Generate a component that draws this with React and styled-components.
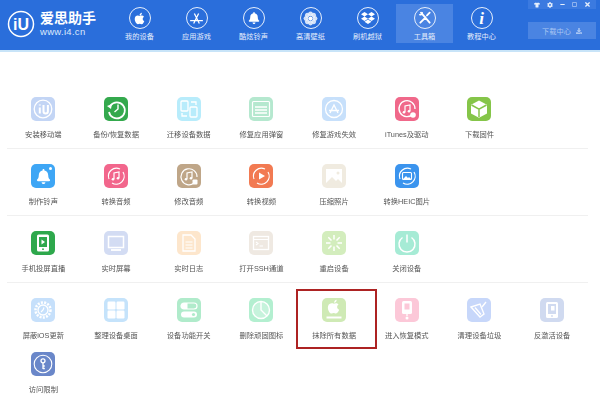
import styled, { createGlobalStyle } from 'styled-components';
import { FaApple, FaBell, FaDropbox, FaTshirt, FaCog, FaTimes, FaRegSquare, FaMinus, FaDownload } from 'react-icons/fa';

const NavInfo = styled.span`
	font-family: "Liberation Serif", serif;
	font-size: 17px;
	font-style: italic;
	font-weight: 700;
	line-height: 1;
`;

const arcs = (
	<>
		<path d="M5 15a8 8 0 0 1 11-10" />
		<path d="M19 8a8 8 0 0 1-11 11" />
	</>
);

const note = <path d="M10 15V9l5-1v6" strokeWidth="1.2" />;
const noteHeads = (
	<>
		<circle cx="9" cy="15.2" r="1.3" className="solid" />
		<circle cx="14" cy="14.2" r="1.3" className="solid" />
	</>
);

const glyphs = {
	logo: (
		<>
			<circle cx="12" cy="12" r="8.8" strokeWidth="1.3" />
			<path d="M8.8 10.5v6M8.8 7.6v1M12.5 8v6.2a2.2 2.2 0 0 0 4.4 0V8" strokeWidth="2" />
		</>
	),
	backup: (
		<>
			<path d="M6.5 8.5A8 8 0 1 1 5 15" strokeWidth="1.7" />
			<path d="M3 9l4 3 1-5z" className="solid" />
			<path d="M14 7.5V12l-3.5 3" strokeWidth="1.4" />
		</>
	),
	transfer: (
		<>
			<rect x="4" y="4" width="7" height="10" rx="1" strokeWidth="1.3" />
			<rect x="13" y="10" width="7" height="10" rx="1" strokeWidth="1.3" />
			<path d="M14 5h5v3M10 19H5v-3" strokeWidth="1.3" />
		</>
	),
	popup: (
		<>
			<rect x="3.5" y="4.5" width="17" height="15" rx="1" strokeWidth="1.2" />
			<path d="M6 10h12M6 13h12M6 16h12" strokeWidth="1.4" />
		</>
	),
	game: (
		<>
			<circle cx="12" cy="12" r="8.5" strokeWidth="1.3" />
			<path d="M8 16l4-8 4 8M7 13.5h10" strokeWidth="1.3" />
		</>
	),
	itunes: (
		<>
			<path d="M18 17a8 8 0 1 1 2-5" strokeWidth="1.3" />
			{note}
			{noteHeads}
			<circle cx="18" cy="18" r="2.8" className="solid" />
		</>
	),
	cube: (
		<>
			<path d="M12 3.5l8 4.2v8.8l-8 4.2-8-4.2V7.7z" className="solid" />
			<path d="M4.5 8l7.5 4.2L19.5 8M12 12.2V20" className="tint" strokeWidth="1.5" />
		</>
	),
	audio: (
		<>
			{arcs}
			{note}
			{noteHeads}
		</>
	),
	editAudio: (
		<>
			<path d="M17 19a8 8 0 1 1 3-6" strokeWidth="1.2" />
			{note}
			{noteHeads}
			<rect x="15.5" y="15.5" width="5" height="5" rx="1" className="solid" />
		</>
	),
	video: (
		<>
			{arcs}
			<path d="M10 8.5l6 3.5-6 3.5z" className="solid" />
		</>
	),
	photo: (
		<>
			<rect x="4" y="5" width="16" height="14" className="solid" />
			<path d="M4 19l6-6 4 4 2-2 4 4z" className="tint" />
			<circle cx="16" cy="9" r="1.5" className="tint" />
		</>
	),
	heic: (
		<>
			{arcs}
			<rect x="7.5" y="8.5" width="9" height="7" rx="1" strokeWidth="1.1" />
			<path d="M8 15l3-3 2 2 1-1 2 2z" className="solid" />
		</>
	),
	cast: (
		<>
			<rect x="6" y="3.5" width="12" height="17" rx="1.5" className="solid" />
			<rect x="8" y="6" width="8" height="10" className="tint" />
			<path d="M10.5 8.5l3.5 2.5-3.5 2.5z" className="solid" />
			<circle cx="12" cy="18.2" r="0.9" className="tint" />
		</>
	),
	screen: (
		<>
			<rect x="4.5" y="5.5" width="15" height="11" strokeWidth="1.5" />
			<path d="M7 19h10" strokeWidth="1.8" />
		</>
	),
	log: (
		<>
			<path d="M6 4h8l4 4v12H6z" strokeWidth="1.3" />
			<path d="M8.5 11h7M8.5 14h7M8.5 17h7" strokeWidth="1.2" />
		</>
	),
	ssh: (
		<>
			<rect x="4.5" y="5.5" width="15" height="13" strokeWidth="1.3" />
			<path d="M4.5 8.5h15M7 11l2 1.5L7 14M10.5 15H14" strokeWidth="1.1" />
		</>
	),
	reboot: (
		<path
			d="M12 4v4.5M12 15.5V20M4 12h4.5M15.5 12H20M6.3 6.3l3.2 3.2M14.5 14.5l3.2 3.2M17.7 6.3l-3.2 3.2M9.5 14.5l-3.2 3.2"
			strokeWidth="1.5"
		/>
	),
	power: (
		<>
			<path d="M7.5 6.5a8 8 0 1 0 9 0" strokeWidth="1.5" />
			<path d="M12 3.5v8" strokeWidth="1.5" />
		</>
	),
	gear: (
		<>
			<circle cx="12" cy="12" r="7.5" strokeWidth="2.5" strokeDasharray="2 1.3" />
			<circle cx="12" cy="12" r="5" strokeWidth="1.3" />
			<path d="M13 9.5L12 12l-2 2" strokeWidth="1.2" />
		</>
	),
	grid: (
		<>
			<rect x="3.5" y="3.5" width="8" height="8" rx="1.2" className="solid" />
			<rect x="12.5" y="3.5" width="8" height="8" rx="1.2" className="solid" />
			<rect x="3.5" y="12.5" width="8" height="8" rx="1.2" className="solid" />
			<rect x="12.5" y="12.5" width="8" height="8" rx="1.2" className="solid" />
		</>
	),
	toggle: (
		<>
			<rect x="4" y="5" width="16" height="6" rx="3" strokeWidth="1.2" />
			<path d="M7 5h3.5v6H7a3 3 0 0 1 0-6z" className="solid" />
			<rect x="4" y="13.5" width="16" height="6" rx="3" className="solid" />
			<circle cx="16.5" cy="16.5" r="1.6" className="tint" />
		</>
	),
	pie: (
		<>
			<circle cx="12" cy="12" r="8.5" fill="#fff" fillOpacity="0.25" strokeWidth="1.4" />
			<path d="M12 3.5V12l6 6" strokeWidth="1.4" />
		</>
	),
	erase: (
		<>
			<g transform="translate(-2.6 -3.6) scale(1.2)">
				<path
					d="M12 7.8c1-.5 2.8-1 4 .6-1.8 1.2-1.5 3.6.5 4.4-.7 1.7-1.8 3.2-3 3.2-.7 0-1-.4-1.6-.4s-1 .4-1.7.4c-1.7 0-3.7-3.7-3-6.2.6-2.3 3.2-2.8 4.8-2z"
					className="solid"
				/>
				<path d="M12.2 7c0-1.3.9-2.3 2.2-2.5 0 1.4-.9 2.4-2.2 2.5z" className="solid" />
			</g>
			<path d="M4.5 19.5h15" strokeWidth="2" />
		</>
	),
	recovery: (
		<>
			<rect x="7" y="3" width="10" height="13" rx="1.5" className="solid" />
			<rect x="9.5" y="5.5" width="5" height="6" className="tint" />
			<path d="M12 16v2" strokeWidth="1.3" />
			<circle cx="12" cy="20" r="1.5" className="solid" />
		</>
	),
	broom: (
		<>
			<path d="M4 9l9-3 4 10-4 3z" strokeWidth="1.4" />
			<path d="M15 9l4-5M8 9.5l6 7" strokeWidth="1.4" />
		</>
	),
	tablet: (
		<>
			<rect x="6" y="4" width="12" height="16" rx="1.5" className="solid" />
			<rect x="8" y="6" width="8" height="10" className="tint" />
			<rect x="11" y="8" width="3.5" height="4.5" className="solid" />
			<circle cx="12" cy="18" r="0.9" className="tint" />
		</>
	),
	key: (
		<>
			<circle cx="12" cy="12" r="8.8" strokeWidth="1.1" />
			<circle cx="12" cy="8.8" r="2" strokeWidth="1.3" />
			<path d="M12 10.8V17M12 14h1.8M12 16.5h1.8" strokeWidth="1.3" />
		</>
	),
};

const sections = [
	[
		{ label: '安装移动端', color: '#c3d5f5', glyph: 'logo' },
		{ label: '备份/恢复数据', color: '#34a94d', glyph: 'backup' },
		{ label: '迁移设备数据', color: '#b8ecfb', glyph: 'transfer' },
		{ label: '修复应用弹窗', color: '#b5e8cf', glyph: 'popup' },
		{ label: '修复游戏失效', color: '#c7e0fb', glyph: 'game' },
		{ label: 'iTunes及驱动', color: '#f0688a', glyph: 'itunes' },
		{ label: '下载固件', color: '#85c549', glyph: 'cube' },
	],
	[
		{ label: '制作铃声', color: '#3ea6f5', bell: true },
		{ label: '转换音频', color: '#f2668c', glyph: 'audio' },
		{ label: '修改音频', color: '#bfa688', glyph: 'editAudio' },
		{ label: '转换视频', color: '#f27a52', glyph: 'video' },
		{ label: '压缩照片', color: '#f0ebe0', glyph: 'photo' },
		{ label: '转换HEIC图片', color: '#3b94ee', glyph: 'heic' },
	],
	[
		{ label: '手机投屏直播', color: '#2ea84c', glyph: 'cast' },
		{ label: '实时屏幕', color: '#d3dcf3', glyph: 'screen' },
		{ label: '实时日志', color: '#fde6cc', glyph: 'log' },
		{ label: '打开SSH通道', color: '#efe9e2', glyph: 'ssh' },
		{ label: '重启设备', color: '#d3edbd', glyph: 'reboot' },
		{ label: '关闭设备', color: '#a6ebd5', glyph: 'power' },
	],
	[
		{ label: '屏蔽iOS更新', color: '#c6e0fb', glyph: 'gear' },
		{ label: '整理设备桌面', color: '#c5e3fb', glyph: 'grid' },
		{ label: '设备功能开关', color: '#b0ebcb', glyph: 'toggle' },
		{ label: '删除顽固图标', color: '#b3efd0', glyph: 'pie' },
		{ label: '抹除所有数据', color: '#cfeab5', glyph: 'erase', marked: true },
		{ label: '进入恢复模式', color: '#fcc8d8', glyph: 'recovery' },
		{ label: '清理设备垃圾', color: '#c7d7fa', glyph: 'broom' },
		{ label: '反激活设备', color: '#d0daf0', glyph: 'tablet' },
		{ label: '访问限制', color: '#6a87c9', glyph: 'key' },
	],
];

const navItems = [
	{ label: '我的设备', icon: <FaApple size={13} /> },
	{
		label: '应用游戏',
		icon: (
			<svg viewBox="0 0 24 24" width="17" height="17" fill="none" stroke="#fff" strokeWidth="1.8">
				<path d="M9 5l7 14M15 5L8 19M3 15h18" />
			</svg>
		),
	},
	{ label: '酷炫铃声', icon: <FaBell size={12} /> },
	{
		label: '高清壁纸',
		icon: (
			<svg viewBox="0 0 24 24" width="17" height="17" fill="#fff">
				<circle cx="12" cy="12" r="3" />
				{[0, 45, 90, 135, 180, 225, 270, 315].map((deg) => (
					<circle key={deg} cx="12" cy="5.5" r="3.3" opacity="0.8" transform={`rotate(${deg} 12 12)`} />
				))}
			</svg>
		),
	},
	{ label: '刷机越狱', icon: <FaDropbox size={14} /> },
	{
		label: '工具箱',
		active: true,
		icon: (
			<svg viewBox="0 0 24 24" width="16" height="16" fill="none" stroke="#fff" strokeWidth="2.8" strokeLinecap="round">
				<path d="M6 4l13 15M19 4l-4 4M5 19L13 11" />
				<path d="M4 7a3 3 0 0 0 4-3" strokeWidth="2" />
			</svg>
		),
	},
	{ label: '教程中心', icon: <NavInfo>i</NavInfo> },
];

export default function App() {
	return (
		<>
			<GlobalStyle />
			<Page>
				<Header>
					<Brand>
						<BrandMark viewBox="0 0 28 28">
							<circle cx="14" cy="14" r="12.5" />
							<text x="14" y="20" textAnchor="middle">
								iU
							</text>
						</BrandMark>
						<BrandText>
							<BrandName>爱思助手</BrandName>
							<BrandUrl>www.i4.cn</BrandUrl>
						</BrandText>
					</Brand>
					<Nav>
						{navItems.map((item) => (
							<NavItem key={item.label} $active={item.active}>
								<NavCircle>{item.icon}</NavCircle>
								<NavLabel>{item.label}</NavLabel>
							</NavItem>
						))}
					</Nav>
					<Side>
						<WindowBar>
							<FaTshirt size={6} />
							<FaCog size={6} />
							<FaMinus size={5} />
							<FaRegSquare size={5} />
							<FaTimes size={7} />
						</WindowBar>
						<DownloadButton>
							下载中心
							<FaDownload size={6} />
						</DownloadButton>
					</Side>
				</Header>
				<Main>
					{sections.map((tools, i) => (
						<Section key={i} $last={i === sections.length - 1}>
							{tools.map((tool) => (
								<Tool key={tool.label} $marked={tool.marked}>
									<Tile $color={tool.color}>
										{tool.bell ? (
											<>
												<FaBell size={15} color="#fff" />
												<Sparkle />
											</>
										) : (
											<Glyph viewBox="0 0 24 24" $color={tool.color}>
												{glyphs[tool.glyph]}
											</Glyph>
										)}
									</Tile>
									<ToolLabel>{tool.label}</ToolLabel>
								</Tool>
							))}
						</Section>
					))}
				</Main>
			</Page>
		</>
	);
}

const GlobalStyle = createGlobalStyle`
	html, body {
		margin: 0;
		background: #fff;
	}
	body {
		font-family: "Liberation Sans", "Noto Sans CJK SC", sans-serif;
	}
`;

const Page = styled.div`
	width: 600px;
	height: 411px;
	overflow: hidden;
	filter: blur(0.45px);
`;

const Header = styled.header`
	display: flex;
	height: 50px;
	background: #2a6edb;
	border-bottom: 2px solid #c8e4f8;
`;

const Brand = styled.div`
	display: flex;
	align-items: center;
	gap: 5px;
	width: 111px;
	padding: 0 0 2px 7px;
	box-sizing: border-box;
`;

const BrandMark = styled.svg`
	width: 28px;
	height: 28px;
	flex: none;

	circle {
		fill: none;
		stroke: #fff;
		stroke-width: 1.5;
	}
	text {
		fill: #fff;
		font-family: "Liberation Sans", sans-serif;
		font-size: 16px;
		font-weight: 700;
	}
`;

const BrandText = styled.div`
	display: flex;
	flex-direction: column;
	color: #fff;
`;

const BrandName = styled.span`
	font-size: 14px;
	font-weight: 700;
	line-height: 16px;
	white-space: nowrap;
`;

const BrandUrl = styled.span`
	font-size: 9.5px;
	line-height: 12px;
	color: #dce9fb;
	letter-spacing: 0.3px;
`;

const Nav = styled.nav`
	display: flex;
	padding-top: 4px;
	height: 39px;
`;

const NavItem = styled.div`
	display: flex;
	flex-direction: column;
	align-items: center;
	width: 57px;
	height: 39px;
	padding-top: 3px;
	box-sizing: border-box;
	background: ${({ $active }) => ($active ? '#4a84e2' : 'transparent')};
`;

const NavCircle = styled.div`
	display: flex;
	flex: none;
	align-items: center;
	justify-content: center;
	width: 20px;
	height: 20px;
	border: 1px solid #e6effc;
	border-radius: 50%;
	color: #fff;
`;

const NavLabel = styled.span`
	margin-top: 3px;
	font-size: 7.2px;
	line-height: 10px;
	color: #e4edfb;
	white-space: nowrap;
`;

const Side = styled.div`
	display: flex;
	flex-direction: column;
	margin-left: auto;
	margin-right: 4px;
	width: 68px;
`;

const WindowBar = styled.div`
	display: flex;
	align-items: center;
	justify-content: space-around;
	height: 9px;
	padding: 0 2px;
	background: #3b7ae0;
	color: #e6effc;
`;

const DownloadButton = styled.div`
	display: flex;
	align-items: center;
	justify-content: center;
	gap: 5px;
	height: 17px;
	margin-top: 13px;
	background: #4a84e2;
	color: #a9c6f3;
	font-size: 7.2px;
`;

const Main = styled.main`
	padding: 30px 12px 0 8px;
`;

const Section = styled.section`
	display: grid;
	grid-template-columns: repeat(8, 72.7px);
	grid-auto-rows: 43px;
	row-gap: 11px;
	padding: 15px 0 ${({ $last }) => ($last ? '0' : '8px')};
	border-bottom: ${({ $last }) => ($last ? 'none' : '1px solid #f0f0f0')};
	margin-left: -1px;
`;

const Tool = styled.div`
	position: relative;
	display: flex;
	flex-direction: column;
	align-items: center;

	${({ $marked }) =>
		$marked &&
		`
		&::after {
			content: '';
			position: absolute;
			left: -2px;
			top: -9px;
			width: 77px;
			height: 56px;
			border: 2px solid #ad2323;
		}
	`}
`;

const Tile = styled.div`
	position: relative;
	display: flex;
	flex: none;
	align-items: center;
	justify-content: center;
	width: 24px;
	height: 24px;
	border-radius: 5px;
	background: ${({ $color }) => $color};
`;

const Sparkle = styled.i`
	position: absolute;
	top: 3px;
	right: 3px;
	width: 3px;
	height: 3px;
	border-radius: 50%;
	background: #fff;
`;

const Glyph = styled.svg`
	width: 24px;
	height: 24px;
	fill: none;
	stroke: #fff;
	stroke-width: 1.2;

	.solid {
		fill: #fff;
		stroke: none;
	}
	.tint {
		fill: ${({ $color }) => $color};
		stroke: none;
	}
	path.tint[stroke-width] {
		fill: none;
		stroke: ${({ $color }) => $color};
	}
`;

const ToolLabel = styled.span`
	margin-top: 8px;
	font-size: 7.3px;
	line-height: 11px;
	color: #555;
	white-space: nowrap;
`;
